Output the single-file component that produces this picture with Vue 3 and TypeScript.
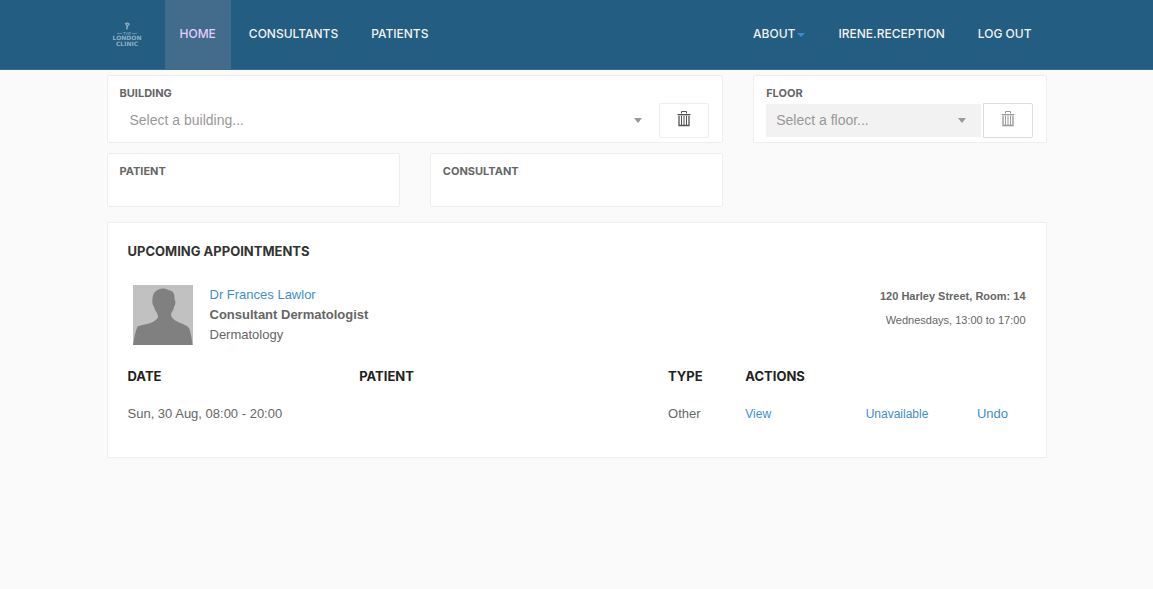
<script setup lang="ts">
import { ref } from 'vue'

interface NavItem {
  label: string
  active?: boolean
  menu?: boolean
}

interface Appointment {
  date: string
  patient: string
  type: string
}

const mainNav: NavItem[] = [
  { label: 'Home', active: true },
  { label: 'Consultants' },
  { label: 'Patients' },
]

const userNav: NavItem[] = [
  { label: 'About', menu: true },
  { label: 'irene.reception' },
  { label: 'Log out' },
]

const appointments: Appointment[] = [
  { date: 'Sun, 30 Aug, 08:00 - 20:00', patient: '', type: 'Other' },
]

const building = ref('')
const floor = ref('')
const patient = ref('')
const consultant = ref('')
</script>

<template>
  <header class="topbar">
    <div class="container bar">
      <a href="#" class="logo" aria-label="The London Clinic">
        <svg width="40" height="40" viewBox="0 0 40 40" aria-hidden="true">
          <path d="M18.500 9c0-1.200 3.500-1.200 3.500.2 0 1.200-2 .8-2 2M18.800 9l1.800 3-1 1 .6 1.500" fill="none" stroke="currentColor" stroke-width="1.300" />
          <path d="M10 18.500h5M25 18.500h5" stroke="currentColor" stroke-width="1" opacity=".6" />
          <text x="20" y="20" text-anchor="middle" font-size="4">THE</text>
          <text x="20" y="25" text-anchor="middle" font-size="6" font-weight="700">LONDON</text>
          <text x="20" y="31" text-anchor="middle" font-size="6" font-weight="700">CLINIC</text>
        </svg>
      </a>
      <nav class="links" aria-label="Main">
        <a v-for="n in mainNav" :key="n.label" href="#" :class="{ active: n.active }">{{ n.label }}</a>
      </nav>
      <nav class="links user" aria-label="Account">
        <a v-for="n in userNav" :key="n.label" href="#">{{ n.label }}<span v-if="n.menu" class="caret"></span></a>
      </nav>
    </div>
  </header>

  <main class="container">
    <form class="filters" @submit.prevent>
      <div class="panel wide">
        <label for="building">Building</label>
        <div class="picker">
          <div class="select">
            <select id="building" v-model="building">
              <option value="">Select a building...</option>
            </select>
            <span class="caret"></span>
          </div>
          <button type="button" class="clear" aria-label="Clear building" @click="building = ''">
            <svg width="14" height="16" viewBox="0 0 14 16" fill="none" stroke="currentColor" aria-hidden="true">
              <path d="M4.500 2.500v-2h5v2M.5 3.500h13" />
              <path d="M1 4.500h12" opacity=".4" />
              <path d="M2 5v9.500h10V5" stroke-width="1.300" />
              <path d="M4.500 5v9.500M7 5v9.500M9.500 5v9.500" />
            </svg>
          </button>
        </div>
      </div>
      <div class="panel">
        <label for="floor">Floor</label>
        <div class="picker">
          <div class="select off">
            <select id="floor" v-model="floor" disabled>
              <option value="">Select a floor...</option>
            </select>
            <span class="caret"></span>
          </div>
          <button type="button" class="clear off" aria-label="Clear floor" disabled>
            <svg width="14" height="16" viewBox="0 0 14 16" fill="none" stroke="currentColor" aria-hidden="true">
              <path d="M4.500 2.500v-2h5v2M.5 3.500h13" />
              <path d="M1 4.500h12" opacity=".4" />
              <path d="M2 5v9.500h10V5" stroke-width="1.300" />
              <path d="M4.500 5v9.500M7 5v9.500M9.500 5v9.500" />
            </svg>
          </button>
        </div>
      </div>
      <div class="panel">
        <label for="patient">Patient</label>
        <input id="patient" v-model="patient" type="text" />
      </div>
      <div class="panel">
        <label for="consultant">Consultant</label>
        <input id="consultant" v-model="consultant" type="text" />
      </div>
    </form>

    <section class="appointments">
      <h2>Upcoming appointments</h2>
      <div class="doctor">
        <svg class="avatar" width="60" height="60" viewBox="0 0 60 60" aria-hidden="true">
          <path d="M0 0h60v60H0z" fill="#c1c1c1" />
          <path d="M0 60C1 53 2.500 46 4.500 41.500 8 40 13 39.500 17.500 38c3-1 6-3 7.500-5.500 0-2-.5-3.500-1.500-5.500-1.500-1-2-3.500-2.500-5.500-1.500-1-2-5-1.500-8C20 7 24 4 30 3.500c2.500-.2 4 .8 5 1.500 4 .5 6.500 2.500 6.500 7 0 2 .3 3 1 5-.2 2-.8 4-1.500 5-.5 2-1 4-2.500 5.500-.6 2-.5 3.500.5 5 2 2.500 5 4 8 5.500 3 1 7 2.500 9 5 2 5 3 11 4 22z" fill="#808080" />
        </svg>
        <div class="who">
          <a href="#">Dr Frances Lawlor</a>
          <strong>Consultant Dermatologist</strong>
          <span>Dermatology</span>
        </div>
        <div class="where">
          <strong>120 Harley Street, Room: 14</strong>
          <span>Wednesdays, 13:00 to 17:00</span>
        </div>
      </div>
      <table>
        <colgroup>
          <col class="c-date" />
          <col class="c-patient" />
          <col class="c-type" />
          <col class="c-view" />
          <col class="c-state" />
          <col />
        </colgroup>
        <thead>
          <tr>
            <th scope="col">Date</th>
            <th scope="col">Patient</th>
            <th scope="col">Type</th>
            <th scope="col" colspan="3">Actions</th>
          </tr>
        </thead>
        <tbody>
          <tr v-for="a in appointments" :key="a.date">
            <td>{{ a.date }}</td>
            <td>{{ a.patient }}</td>
            <td>{{ a.type }}</td>
            <td><a href="#" class="small">View</a></td>
            <td><a href="#" class="small">Unavailable</a></td>
            <td><a href="#">Undo</a></td>
          </tr>
        </tbody>
      </table>
    </section>
  </main>
</template>

<style>
body {
  margin: 0;
  background: #fafafa;
}
</style>

<style scoped>
* {
  box-sizing: border-box;
}

.topbar,
main {
  font-family: "Liberation Sans", Arial, sans-serif;
  font-size: 13px;
  line-height: 20px;
  color: #666;
}

a {
  color: #3d8fcb;
  text-decoration: none;
}

.container {
  width: 100%;
  max-width: 940px;
  margin: 0 auto;
}

.topbar {
  background: #235d81;
  border-bottom: 1px solid #3a6c8d;
}

.bar {
  display: flex;
  align-items: stretch;
  height: 69px;
}

.logo {
  display: flex;
  align-items: center;
  width: 58px;
  color: #8fb0c5;
}

.logo text {
  fill: currentColor;
  font-family: "DejaVu Sans", sans-serif;
}

.links {
  display: flex;
  gap: 3px;
}

.links a {
  display: flex;
  align-items: center;
  padding: 0 15px 2px;
  font-family: Inter, sans-serif;
  font-size: 12px;
  font-weight: 500;
  text-transform: uppercase;
  color: #f2f2f2;
}

.links a.active {
  background: #426b8c;
  color: #e6ccff;
}

.user {
  margin-left: auto;
}

.caret {
  width: 0;
  height: 0;
  border: 4px solid transparent;
  border-top-color: currentColor;
  border-bottom: 0;
}

.user .caret {
  margin: 2px 0 0 2px;
  color: #428bca;
}

.filters {
  display: grid;
  grid-template-columns: repeat(3, 1fr);
  gap: 10px 30px;
  padding: 5px 0 15px;
}

.panel {
  padding: 7px 13px 4px 12px;
  background: #fff;
  border: 1px solid #eee;
  border-radius: 2px;
}

.panel.wide {
  grid-column: span 2;
}

.panel label {
  display: block;
  font-family: Inter, sans-serif;
  font-size: 11px;
  font-weight: 700;
  text-transform: uppercase;
}

.panel input {
  display: block;
  width: 100%;
  height: 21px;
  padding: 0;
  border: 0;
  outline: 0;
  background: transparent;
  font: inherit;
}

.picker {
  display: flex;
  align-items: center;
  gap: 2px;
}

.select {
  display: grid;
  flex: 1;
  align-items: center;
}

.select select {
  grid-area: 1 / 1;
  width: 100%;
  height: 33px;
  padding: 0 30px 2px 10px;
  border: 0;
  border-radius: 0;
  appearance: none;
  background: transparent;
  font-family: "Liberation Sans", Arial, sans-serif;
  font-size: 14px;
  color: #999;
  opacity: 1;
}

.select.off select {
  background: #f2f2f2;
}

.select .caret {
  grid-area: 1 / 1;
  justify-self: end;
  margin-right: 15px;
  border-width: 5px 4px 0;
  color: #999;
  pointer-events: none;
}

.clear {
  display: flex;
  align-items: center;
  justify-content: center;
  width: 50px;
  height: 35px;
  padding: 0 0 4px;
  border: 1px solid #eee;
  border-radius: 0 2px 2px 0;
  background: #fff;
  color: #555;
}

.clear.off {
  border-color: #ddd;
  color: #999;
}

.appointments {
  padding: 18px 20px 24px;
  background: #fff;
  border: 1px solid #eee;
}

h2 {
  margin: 0;
  font-family: Inter, sans-serif;
  font-size: 13px;
  line-height: 20px;
  font-weight: 700;
  text-transform: uppercase;
  color: #333;
}

.doctor {
  display: flex;
  padding: 24px 0 12px 5px;
}

.who {
  display: flex;
  flex-direction: column;
  margin-left: 17px;
}

.where {
  display: flex;
  flex-direction: column;
  gap: 4px;
  margin-left: auto;
  padding-top: 1px;
  font-size: 11px;
  text-align: right;
}

table {
  width: 100%;
  table-layout: fixed;
  border-collapse: collapse;
}

.c-date {
  width: 25.8%;
}

.c-patient {
  width: 34.4%;
}

.c-type {
  width: 8.6%;
}

.c-view {
  width: 13.4%;
}

.c-state {
  width: 12.4%;
}

th,
td {
  padding: 9px 0;
  text-align: left;
  white-space: nowrap;
}

th {
  font-family: Inter, sans-serif;
  font-size: 13px;
  font-weight: 700;
  text-transform: uppercase;
  color: #222;
}

.small {
  font-size: 12px;
}
</style>
